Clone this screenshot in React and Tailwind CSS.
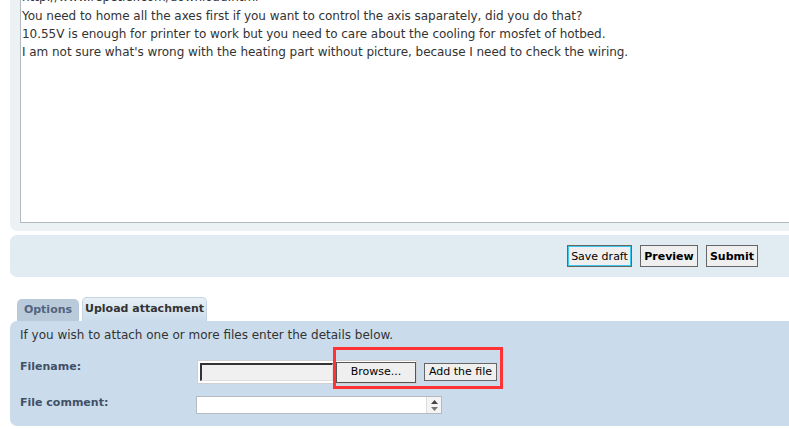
import React from "react";

const font = { fontFamily: '"DejaVu Sans", Verdana, sans-serif' };

export default function App() {
  return (
    <div className="w-[789px] h-[429px] overflow-hidden bg-white text-[#333]" style={font}>
      {/* Editor panel */}
      <div className="ml-[10px] w-[800px] h-[231px] bg-[#ECF1F3] rounded-bl-[7px] pl-[10px]">
        <div className="w-[800px] h-[223px] bg-white border-l border-b border-[#B4BAC0] overflow-hidden">
          <div className="mt-[-12px] pl-[1px] text-[12px] leading-[18px] tracking-[-0.04px] text-[#333] whitespace-nowrap">
            <div className="h-[19px]">http://www.repetier.com/download.html</div>
            <div>You need to home all the axes first if you want to control the axis saparately, did you do that?</div>
            <div>10.55V is enough for printer to work but you need to care about the cooling for mosfet of hotbed.</div>
            <div>I am not sure what's wrong with the heating part without picture, because I need to check the wiring.</div>
          </div>
        </div>
      </div>

      {/* Buttons panel */}
      <div className="mt-[4px] ml-[10px] h-[42px] bg-[#E1EBF2] rounded-l-[7px] flex items-center justify-end pr-[31px] gap-[8px]">
        <button className="h-[22px] w-[65px] border border-[#666] bg-[#EFEFEF] text-[11px] text-[#000] shadow-[inset_0_0_0_1px_#3CC8EC] leading-none" style={font}>
          Save draft
        </button>
        <button className="h-[22px] w-[58px] border border-[#666] bg-[#EFEFEF] text-[11px] font-bold text-[#000] leading-none" style={font}>
          Preview
        </button>
        <button className="h-[22px] w-[52px] border border-[#666] bg-[#EFEFEF] text-[11px] font-bold text-[#000] leading-none" style={font}>
          Submit
        </button>
      </div>

      {/* Tabs */}
      <div className="mt-[20px] ml-[17px] flex items-end gap-[3px] h-[24px]">
        <div className="h-[22px] w-[62px] bg-[#B9CBDA] rounded-t-[5px] flex items-center justify-center text-[11px] font-bold text-[#536482]">
          Options
        </div>
        <div className="h-[24px] w-[125px] rounded-t-[5px] border border-b-0 border-[#C4D4E2] bg-gradient-to-b from-[#E8F0F6] to-[#CADCEB] flex items-center justify-center text-[11px] font-bold text-[#333]">
          Upload attachment
        </div>
      </div>

      {/* Attachment panel */}
      <div className="ml-[10px] h-[105px] bg-[#CADCEB] rounded-l-[7px] pl-[10px] pt-[5px]">
        <div className="text-[12px] leading-[18px] text-[#333]">
          If you wish to attach one or more files enter the details below.
        </div>
        <div className="mt-[16px] flex items-start h-[24px]">
          <div className="w-[177px] text-[11px] leading-[14px] font-bold text-[#425067]">Filename:</div>
          <div className="relative flex items-center">
            <div className="h-[24px] w-[220px] bg-white border border-[#D0D0D0] flex items-center pl-[2px]">
              <div className="h-[18px] w-[133px] bg-[#F0F0F0] border-t-2 border-l-2 border-[#333] border-b border-r border-b-[#E0E0E0] border-r-[#E0E0E0]" />
              <div className="ml-[3px] h-[21px] w-[80px] bg-[#EFEFEF] border border-[#555] flex items-center justify-center text-[11px] text-[#000]">
                Browse...
              </div>
            </div>
            <div className="ml-[7px] h-[18px] w-[73px] bg-[#EFEFEF] border border-[#666] flex items-center justify-center text-[11px] text-[#000]">
              Add the file
            </div>
            <div className="absolute left-[136px] top-[-13px] w-[170px] h-[42px] border-[3px] border-[#FF3333]" />
          </div>
        </div>
        <div className="mt-[12px] flex items-start">
          <div className="w-[176px] text-[11px] leading-[14px] font-bold text-[#425067]">File comment:</div>
          <div className="h-[18px] w-[246px] bg-white border border-[#B4BAC0] flex justify-end">
            <div className="w-[15px] h-full border-l border-[#DDD] bg-[#F4F4F4] flex flex-col items-center justify-center gap-[3px]">
              <svg width="7" height="4" viewBox="0 0 7 4"><path d="M0 4 L3.5 0 L7 4 Z" fill="#444" /></svg>
              <svg width="7" height="4" viewBox="0 0 7 4"><path d="M0 0 L3.5 4 L7 0 Z" fill="#777" /></svg>
            </div>
          </div>
        </div>
      </div>
    </div>
  );
}
